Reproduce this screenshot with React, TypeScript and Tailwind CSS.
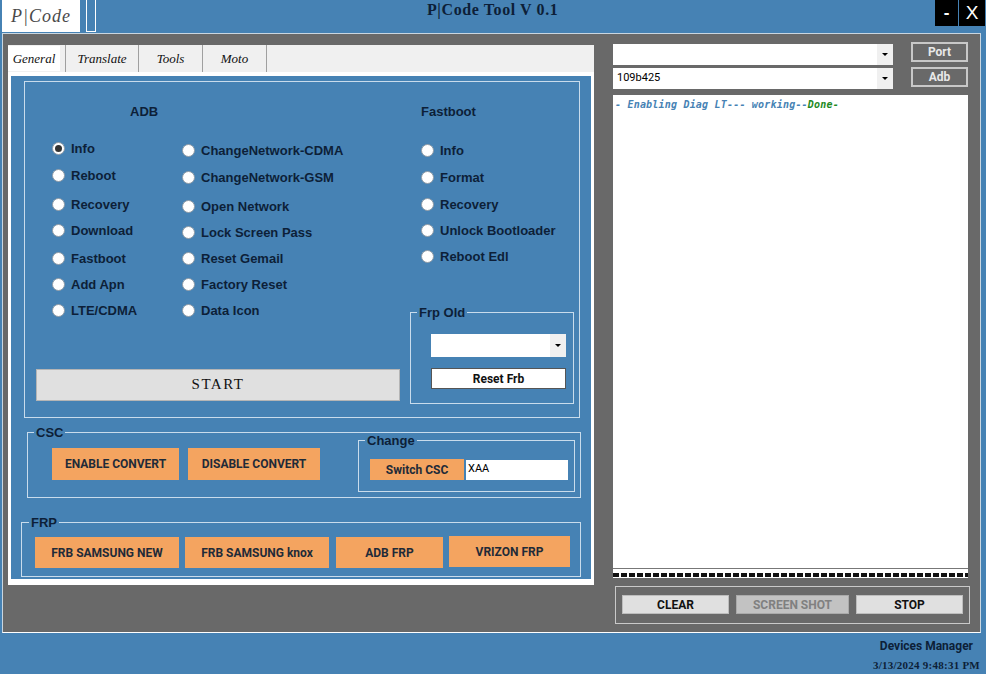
import clsx from "clsx";

const adbLeft = [
  { label: "Info", gap: "mt-[21px]", checked: true },
  { label: "Reboot", gap: "mt-[11px]" },
  { label: "Recovery", gap: "mt-[13px]" },
  { label: "Download", gap: "mt-[10px]" },
  { label: "Fastboot", gap: "mt-[12px]" },
  { label: "Add Apn", gap: "mt-[10px]" },
  { label: "LTE/CDMA", gap: "mt-[10px]" },
];

const adbRight = [
  { label: "ChangeNetwork-CDMA", gap: "mt-[60px]" },
  { label: "ChangeNetwork-GSM", gap: "mt-[11px]" },
  { label: "Open Network", gap: "mt-[13px]" },
  { label: "Lock Screen Pass", gap: "mt-[10px]" },
  { label: "Reset Gemail", gap: "mt-[10px]" },
  { label: "Factory Reset", gap: "mt-[10px]" },
  { label: "Data Icon", gap: "mt-[10px]" },
];

const fastboot = [
  { label: "Info", gap: "mt-[23px]" },
  { label: "Format", gap: "mt-[11px]" },
  { label: "Recovery", gap: "mt-[11px]" },
  { label: "Unlock Bootloader", gap: "mt-[10px]" },
  { label: "Reboot Edl", gap: "mt-[10px]" },
];

const tabs = [
  { label: "General", width: "w-[58px]", active: true },
  { label: "Translate", width: "w-[73px]" },
  { label: "Tools", width: "w-[64px]" },
  { label: "Moto", width: "w-[64px]" },
];

function Radio({ label, gap, checked }: { label: string; gap: string; checked?: boolean }) {
  return (
    <div className={clsx("flex h-4 items-center gap-[6px] whitespace-nowrap text-[13px] leading-4 font-bold text-[#0d1f38]", gap)}>
      <span className="flex h-[13px] w-[13px] shrink-0 items-center justify-center rounded-full border border-[#8f9ba6] bg-white">
        {checked && <span className="h-[7px] w-[7px] rounded-full bg-[#333]" />}
      </span>
      <span className="translate-y-[1px]">{label}</span>
    </div>
  );
}

function Combo({ value, className }: { value?: string; className: string }) {
  return (
    <div className={clsx("flex items-center bg-white pl-1 font-['Roboto',sans-serif] text-[11px] text-black", className)}>
      <span className="flex-1">{value}</span>
      <span className="flex h-full w-4 items-center justify-center bg-[#f0f0f0]">
        <span className="border-x-[3px] border-t-[3px] border-x-transparent border-t-black" />
      </span>
    </div>
  );
}

function Orange({ children, className }: { children: string; className: string }) {
  return (
    <button className={clsx("flex shrink-0 items-center justify-center bg-[#f4a460] font-['Roboto',sans-serif] text-[12px] font-bold text-[#1f2b38]", className)}>
      {children}
    </button>
  );
}

function Legend({ children, className }: { children: string; className: string }) {
  return (
    <span className={clsx("absolute bg-[#4682b4] px-[2px] text-[13px] leading-4 font-bold text-[#0d1f38]", className)}>
      {children}
    </span>
  );
}

export default function App() {
  return (
    <div className="flex h-[674px] w-[986px] flex-col overflow-hidden bg-[#4682b4] font-['Liberation_Sans',sans-serif]">
      {/* title bar */}
      <header className="flex h-[33px] shrink-0 items-start">
        <div className="ml-[2px] flex h-[32px] w-[78px] items-center justify-center bg-white font-['Liberation_Serif',cursive] text-[18px] tracking-[1px] text-[#4a4a4a] italic">
          P|Code
        </div>
        <div className="ml-[6px] h-[32px] w-[10px] border-x border-b border-white bg-[#4682b4]" />
        <h1 className="mt-px ml-[331px] font-['Liberation_Serif',serif] text-[16px] leading-[18px] font-bold tracking-[0.6px] text-[#0d1f38]">
          P|Code Tool V 0.1
        </h1>
        <div className="ml-auto mr-[1px] flex h-[26px] gap-px">
          <span className="flex w-[23px] items-center justify-center bg-black text-[17px] font-bold text-white">-</span>
          <span className="flex w-[26px] items-center justify-center bg-black text-[19px] text-white">X</span>
        </div>
      </header>

      {/* window body */}
      <main className="ml-[2px] flex h-[600px] w-[979px] shrink-0 border-t border-r border-b border-l border-[#c9d6e0] border-b-white bg-[#696969] pl-[5px]">
        <section className="mt-[11px] h-[540px] w-[586px] shrink-0 bg-white">
          <div className="flex h-[27px] bg-[#f0f0f0]">
            {tabs.map((tab) => (
              <div key={tab.label} className={clsx("flex items-center justify-center border-r border-[#a0a0a0] font-['Liberation_Serif',cursive] text-[13px] text-[#111] italic", tab.width)}>
                {tab.active ? (
                  <span className="mr-[5px] flex h-[25px] w-[53px] items-center justify-center bg-white">{tab.label}</span>
                ) : (
                  tab.label
                )}
              </div>
            ))}
          </div>

          <div className="mt-[4px] ml-[3px] h-[503px] w-[580px] bg-[#4682b4] pt-[5px] pl-[13px]">
            {/* ADB / Fastboot */}
            <div className="flex h-[337px] w-[556px] border border-[#c9dcec]">
              <div className="w-[385px]">
                <div className="flex pl-[27px]">
                  <div className="w-[130px]">
                    <div className="mt-[22px] ml-[78px] h-4 text-[13px] leading-4 font-bold text-[#0d1f38]">ADB</div>
                    <div className="-mt-px">
                      {adbLeft.map((item) => (
                        <Radio key={item.label} {...item} />
                      ))}
                    </div>
                  </div>
                  <div>
                    {adbRight.map((item) => (
                      <Radio key={item.label} {...item} />
                    ))}
                  </div>
                </div>
                <button className="mt-[51px] ml-[11px] h-[32px] w-[364px] border border-[#b5b5b5] bg-[#e0e0e0] pb-[2px] font-['Liberation_Serif',cursive] text-[15px] tracking-[1.5px] text-[#111]">
                  START
                </button>
              </div>
              <div className="w-[164px]">
                <div className="pl-[11px]">
                  <div className="mt-[22px] h-4 text-[13px] leading-4 font-bold text-[#0d1f38]">Fastboot</div>
                  <div className="-mt-px">
                    {fastboot.map((item) => (
                      <Radio key={item.label} {...item} />
                    ))}
                  </div>
                </div>
                <div className="relative mt-[48px] h-[92px] w-[164px] border border-[#c9dcec]">
                  <Legend className="-top-[8px] left-[6px]">Frp Old</Legend>
                  <Combo className="mt-[21px] ml-[20px] h-[23px] w-[135px]" />
                  <button className="mt-[11px] ml-[20px] h-[21px] w-[135px] border border-[#555] bg-white font-['Roboto',sans-serif] text-[12px] font-bold text-[#111]">
                    Reset Frb
                  </button>
                </div>
              </div>
            </div>

            {/* CSC */}
            <div className="relative mt-[14px] ml-[3px] flex h-[66px] w-[554px] items-start border border-[#c9dcec] pt-[15px] pl-[24px]">
              <Legend className="-top-[8px] left-[6px]">CSC</Legend>
              <Orange className="h-[32px] w-[127px]">ENABLE CONVERT</Orange>
              <Orange className="ml-[9px] h-[32px] w-[132px]">DISABLE CONVERT</Orange>
              <div className="relative -mt-[8px] ml-[38px] flex h-[52px] w-[217px] items-start border border-[#c9dcec] pt-[18px] pl-[11px]">
                <Legend className="-top-[8px] left-[6px]">Change</Legend>
                <Orange className="h-[21px] w-[94px]">Switch CSC</Orange>
                <div className="mt-px ml-[2px] h-[20px] w-[102px] bg-white pl-[2px] font-['Roboto',sans-serif] text-[11px] leading-[17px] text-black">XAA</div>
              </div>
            </div>

            {/* FRP */}
            <div className="relative mt-[24px] -ml-[3px] flex h-[55px] w-[560px] items-start border border-[#c9dcec] pt-[14px] pl-[13px]">
              <Legend className="-top-[8px] left-[7px]">FRP</Legend>
              <Orange className="h-[31px] w-[144px]">FRB SAMSUNG NEW</Orange>
              <Orange className="ml-[6px] h-[31px] w-[144px]">FRB SAMSUNG knox</Orange>
              <Orange className="ml-[7px] h-[31px] w-[107px]">ADB FRP</Orange>
              <Orange className="-mt-px ml-[6px] h-[31px] w-[121px]">VRIZON FRP</Orange>
            </div>
          </div>
        </section>

        {/* right column */}
        <aside className="mt-[10px] ml-[19px] w-[357px] shrink-0">
          <div className="flex items-start">
            <Combo className="h-[21px] w-[280px]" />
            <button className="-mt-[2px] ml-[18px] h-[20px] w-[57px] border-2 border-[#c8c8c8] bg-[#696969] font-['Roboto',sans-serif] text-[12px] leading-3 font-bold text-[#e8e8e8]">Port</button>
          </div>
          <div className="mt-[3px] flex items-start">
            <Combo value="109b425" className="h-[21px] w-[280px]" />
            <button className="-mt-px ml-[18px] h-[20px] w-[57px] border-2 border-[#c8c8c8] bg-[#696969] font-['Roboto',sans-serif] text-[12px] leading-3 font-bold text-[#e8e8e8]">Adb</button>
          </div>
          <div className="mt-[6px] h-[474px] w-[355px] border-b border-[#777] bg-white px-[2px] py-[4px] font-['DejaVu_Sans_Mono',monospace] text-[10px] leading-3 font-bold tracking-[0.2px] text-[#4682b4] italic">
            - Enabling Diag LT--- working--<span className="text-[#1f8a1f]">Done-</span>
          </div>
          <div className="flex h-[9px] w-[355px] items-end bg-white pb-px">
            <div className="h-[4px] w-full bg-[repeating-linear-gradient(90deg,#111_0,#111_6px,#fff_6px,#fff_8px)]" />
          </div>
          <div className="mt-[8px] ml-[2px] flex h-[38px] w-[355px] items-start gap-[7px] border border-[#c9c9c9] pt-[8px] pl-[6px] font-['Roboto',sans-serif] text-[12px] font-bold">
            <button className="h-[19px] w-[107px] border border-[#bdbdbd] bg-[#e0e0e0] text-[#111]">CLEAR</button>
            <button className="h-[19px] w-[113px] border border-[#aaa] bg-[#c2c2c2] text-[#808080]">SCREEN SHOT</button>
            <button className="h-[19px] w-[107px] border border-[#bdbdbd] bg-[#e0e0e0] text-[#111]">STOP</button>
          </div>
        </aside>
      </main>

      {/* status area */}
      <footer className="flex flex-col items-end pt-[5px] pr-[6px]">
        <span className="mr-[7px] font-['Roboto',sans-serif] text-[12px] leading-4 font-bold text-[#0d1f38]">Devices Manager</span>
        <span className="mt-[5px] font-['Liberation_Serif',serif] text-[11px] leading-3 font-bold tracking-[0.25px] text-[#0d1f38]">3/13/2024 9:48:31 PM</span>
      </footer>
    </div>
  );
}
